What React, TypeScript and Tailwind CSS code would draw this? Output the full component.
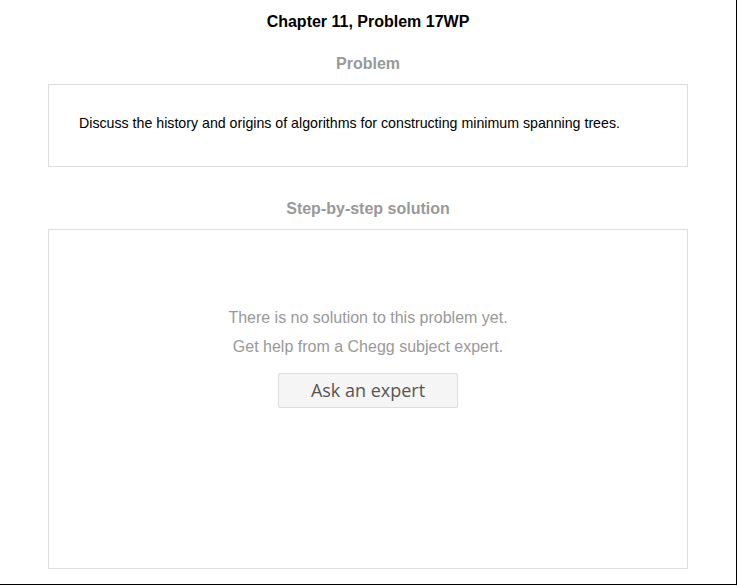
export default function App() {
  return (
    <div className="w-[737px] h-[585px] border-r border-b border-black bg-white font-['Liberation_Sans',Arial,sans-serif]">
      <h1 className="pt-[13px] text-center text-[16px] leading-[18px] font-bold text-black">
        Chapter 11, Problem 17WP
      </h1>

      <h2 className="mt-[24px] text-center text-[16px] leading-[18px] font-bold text-[#999]">
        Problem
      </h2>
      <div className="mx-[48px] mt-[11px] h-[83px] border border-[#ddd] pt-[30px] pl-[30px]">
        <p className="text-[14.2px] leading-[17px] text-black">
          Discuss the history and origins of algorithms for constructing minimum spanning trees.
        </p>
      </div>

      <h2 className="mt-[33px] text-center text-[16px] leading-[18px] font-bold text-[#999]">
        Step-by-step solution
      </h2>
      <div className="mx-[48px] mt-[11px] h-[340px] border border-[#ddd] pt-[73px] flex flex-col items-center">
        <p className="text-[16px] leading-[29px] text-[#999]">There is no solution to this problem yet.</p>
        <p className="text-[16px] leading-[29px] text-[#999]">Get help from a Chegg subject expert.</p>
        <button className="mt-[12px] w-[180px] h-[35px] rounded-[2px] border border-[#ddd] bg-[#f5f5f5] font-['Open_Sans',sans-serif] text-[18px] text-[#555]">
          Ask an expert
        </button>
      </div>
    </div>
  );
}
